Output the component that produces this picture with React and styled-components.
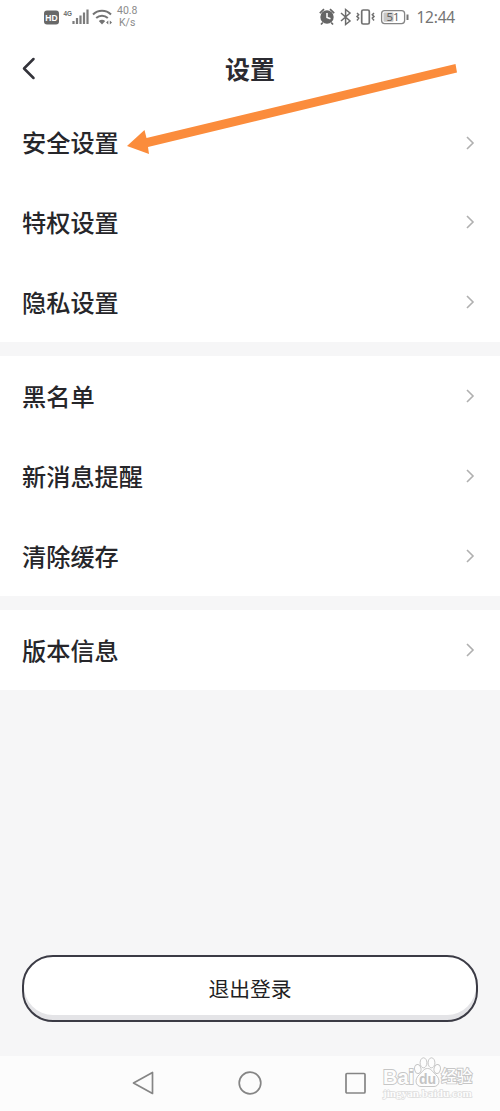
import React from 'react';
import styled, {createGlobalStyle} from 'styled-components';


const GlobalStyle = createGlobalStyle`
  * {
    box-sizing: border-box;
  }

  body {
    margin: 0;
    background-color: #fff;
    font-family: "Liberation Sans", "Noto Sans CJK SC", sans-serif;
  }
`


const PageStl = styled.div`
  position: relative;
  display: flex;
  flex-direction: column;
  width: 500px;
  height: 1111px;
  overflow: hidden;
  background-color: #f6f6f7;
`


const StatusBarStl = styled.div`
  display: flex;
  justify-content: space-between;
  flex: none;
  height: 34px;
  padding: 0 45px 0 43px;
  background-color: #fff;
  color: #747474;
`


const StatusGroupStl = styled.div`
  display: flex;
  align-items: center;
  height: 34px;
`


const SpeedStl = styled.div`
  margin-left: 4px;
  font: 10.5px/12px Roboto, sans-serif;
  color: #8b8b8b;

  p {
    margin: 0;
  }

  p + p {
    padding-left: 2px;
  }
`


const ClockStl = styled.span`
  margin-left: 7px;
  font: 15.5px/34px "Noto Sans", sans-serif;
  letter-spacing: -0.2px;
`


const HeaderStl = styled.header`
  display: grid;
  grid-template-columns: 60px 1fr 60px;
  align-items: center;
  flex: none;
  height: 69px;
  padding-left: 21px;
  padding-right: 21px;
  background-color: #fff;
`


const BackStl = styled.button`
  display: flex;
  padding: 0;
  border: 0;
  background: none;
`


const TitleStl = styled.h1`
  margin: 0;
  padding-top: 2px;
  font-size: 25px;
  line-height: 36px;
  font-weight: 700;
  text-align: center;
  color: #2b2b31;
`


const SectionStl = styled.section`
  flex: none;
  margin-bottom: 14px;
  background-color: #fff;
`


const RowStl = styled.div`
  display: flex;
  align-items: center;
  justify-content: space-between;
  height: ${({$height}) => $height || 80}px;
  padding: 0 25px 0 22px;
`


const LabelStl = styled.span`
  padding-top: 3px;
  font-size: 24.2px;
  line-height: 36px;
  font-weight: 500;
  color: #26262a;
`


const FooterStl = styled.div`
  display: flex;
  flex-direction: column;
  justify-content: flex-end;
  flex: 1;
  padding: 0 22px 34px;
`


const LogoutStl = styled.button`
  height: 67px;
  padding: 0 0 2px;
  border: 2px solid #3b3b45;
  border-radius: 31px;
  background-color: #fff;
  box-shadow: inset 0 -5px 0 #e4e4e7;
  font: 400 20.8px/60px "Noto Sans CJK SC", sans-serif;
  color: #1f1f24;
`


const NavBarStl = styled.nav`
  display: flex;
  align-items: center;
  justify-content: center;
  gap: 82px;
  flex: none;
  height: 55px;
  padding-bottom: 1px;
  background-color: #fcfcfc;
`


const ArrowStl = styled.svg`
  position: absolute;
  left: 120px;
  top: 56px;
`


const WatermarkStl = styled.div`
  position: absolute;
  left: 383px;
  top: 1056px;
  width: 92px;
  height: 48px;
`


const BrandStl = styled.div`
  display: flex;
  align-items: flex-end;
  height: 32px;
  font: 700 20px/22px "Liberation Sans", "Noto Sans CJK SC", sans-serif;
  color: #fdfdfd;
  -webkit-text-stroke: 1.8px #c6c6c6;
  paint-order: stroke fill;
  white-space: nowrap;
`


const PawStl = styled.div`
  display: grid;
  width: 27px;
  height: 31px;

  svg, span {
    grid-area: 1 / 1;
  }

  svg {
    paint-order: normal;
  }

  span {
    align-self: end;
    justify-self: center;
    font-size: 14px;
    line-height: 17px;
    color: #c4c4c4;
    -webkit-text-stroke: 0;
  }
`


const BrandTailStl = styled.span`
  font-size: 15.5px;
  font-weight: 500;
`


const SiteStl = styled.div`
  margin-top: -2px;
  font: 700 11.2px/14px "Liberation Serif", serif;
  color: #fdfdfd;
  -webkit-text-stroke: 1.4px #dcdcdc;
  paint-order: stroke fill;
  white-space: nowrap;
`


const Signal = () => (
  <svg width="70" height="24" viewBox="0 0 70 24" fill="none">
    <rect x="1" y="5.5" width="15" height="14" rx="3" fill="#686868"/>
    <text x="8.5" y="16" textAnchor="middle" fontFamily="Liberation Sans" fontWeight="700" fontSize="8.5" fill="#fff">HD</text>
    <text x="20.5" y="11" fontFamily="Liberation Sans" fontWeight="700" fontSize="8" textLength="8.5" lengthAdjust="spacingAndGlyphs" fill="#686868">4G</text>
    <path d="M30.5 16v3M34 13v6M37.5 10.5v8.5M41 7.5V19M44.5 4.5V19" stroke="#7c7c7c" strokeWidth="2.2"/>
    <path d="M50 9.5c5-5 13-5 18 0M53.2 13c3.3-3 8.3-3 11.6 0" stroke="#737373" strokeWidth="2"/>
    <path d="M55.8 16q3.2-2.7 6.4 0L59 19.5Z" fill="#737373"/>
    <path d="m65.3 15.5-2.2 2 2.2 2ZM66.8 15.5l2.2 2-2.2 2Z" fill="#737373"/>
  </svg>
)


const Indicators = () => (
  <svg width="90" height="24" viewBox="0 0 90 24" fill="none">
    <circle cx="8" cy="12" r="6.7" fill="#656565"/>
    <path d="M.8 8.2 5 4.2M15.2 8.2 11 4.2M3.8 17.5 2 19.5M12.2 17.5l1.8 2" stroke="#656565" strokeWidth="1.7"/>
    <path d="M8 8v4.5l3.5 1.3" stroke="#fff" strokeWidth="1.5"/>
    <path d="m22 8 9 8-4.4 3.5V4.5L31 8l-9 8" stroke="#6c6c6c" strokeWidth="1.5"/>
    <rect x="42.7" y="5" width="7.6" height="14" rx="1.5" stroke="#707070" strokeWidth="1.7"/>
    <path d="m38 8 1.7 1.7L38 11.4l1.7 1.7L38 15.5M55 8l-1.7 1.7 1.7 1.7-1.7 1.7 1.7 2.4" stroke="#707070" strokeWidth="1.5"/>
    <rect x="62.6" y="5.6" width="23" height="13" rx="3" stroke="#858585" strokeWidth="1.3"/>
    <rect x="64.5" y="7.5" width="10" height="9.2" rx="1" fill="#c6c6c6"/>
    <text x="74" y="16.2" textAnchor="middle" fontFamily="Noto Sans" fontSize="11.5" fill="#5f5f5f">51</text>
    <path d="M88.5 9.5v5.5" stroke="#757575" strokeWidth="2"/>
  </svg>
)


const Chevron = () => (
  <svg width="10" height="16" viewBox="0 0 10 16" fill="none">
    <path d="m2 2 6 6-6 6" stroke="#b0b0b0" strokeWidth="1.6"/>
  </svg>
)


const Section = ({items, rowHeights = []}) => (
  <SectionStl>
    {items.map((item, index) => (
      <RowStl key={item} $height={rowHeights[index]}>
        <LabelStl>{item}</LabelStl>
        <Chevron/>
      </RowStl>
    ))}
  </SectionStl>
)


const Watermark = () => (
  <WatermarkStl>
    <BrandStl>
      <span>Bai</span>
      <PawStl>
        <svg width="27" height="31" viewBox="0 0 27 31" fill="#fdfdfd" stroke="#c6c6c6" strokeWidth="1">
          <path d="M13.5 11.5c-4 0-4.500 3-8 6-5.500 4.500-4 12 1.500 12h13c5.500 0 7-7.500 1.500-12-3.500-3-4-6-8-6Z"/>
          <ellipse cx="3.800" cy="12" rx="3.200" ry="4.5" transform="rotate(-10 3.800 12)"/>
          <ellipse cx="9.500" cy="5.800" rx="3.400" ry="5"/>
          <ellipse cx="17.5" cy="5.800" rx="3.400" ry="5"/>
          <ellipse cx="23.200" cy="12" rx="3.200" ry="4.5" transform="rotate(10 23.200 12)"/>
        </svg>
        <span>du</span>
      </PawStl>
      <BrandTailStl>经验</BrandTailStl>
    </BrandStl>
    <SiteStl>jingyan.baidu.com</SiteStl>
  </WatermarkStl>
)


export default function App() {
  return (
    <PageStl>
      <GlobalStyle/>

      <StatusBarStl>
        <StatusGroupStl>
          <Signal/>
          <SpeedStl>
            <p>40.8</p>
            <p>K/s</p>
          </SpeedStl>
        </StatusGroupStl>
        <StatusGroupStl>
          <Indicators/>
          <ClockStl>12:44</ClockStl>
        </StatusGroupStl>
      </StatusBarStl>

      <HeaderStl>
        <BackStl aria-label="返回">
          <svg width="15" height="24" viewBox="0 0 15 24" fill="none">
            <path d="M12.5 2 3 11.5l9.5 9.5" stroke="#33333a" strokeWidth="2.5" strokeLinecap="round" strokeLinejoin="round"/>
          </svg>
        </BackStl>
        <TitleStl>设置</TitleStl>
      </HeaderStl>

      <Section items={['安全设置', '特权设置', '隐私设置']} rowHeights={[79]}/>
      <Section items={['黑名单', '新消息提醒', '清除缓存']}/>
      <Section items={['版本信息']}/>

      <FooterStl>
        <LogoutStl>退出登录</LogoutStl>
      </FooterStl>

      <NavBarStl>
        <svg width="24" height="26" viewBox="0 0 24 26" fill="none" stroke="#858585" strokeWidth="1.7" strokeLinejoin="round">
          <path d="M20.5 2.5v21L1.5 13Z"/>
        </svg>
        <svg width="24" height="26" viewBox="0 0 24 26" fill="none" stroke="#858585" strokeWidth="1.7">
          <circle cx="12" cy="13" r="10.8"/>
        </svg>
        <svg width="24" height="26" viewBox="0 0 24 26" fill="none" stroke="#858585" strokeWidth="1.7">
          <rect x="2" y="3.5" width="19" height="19.5" rx="1"/>
        </svg>
      </NavBarStl>

      {/* pointer to the first row */}
      <ArrowStl width="345" height="106" viewBox="0 0 345 106">
        <path d="M7 90 24.5 74 26.5 82 335.5 8 337 16.5 28 91 29 98Z" fill="#fb8c3c"/>
      </ArrowStl>

      <Watermark/>
    </PageStl>
  )
}
